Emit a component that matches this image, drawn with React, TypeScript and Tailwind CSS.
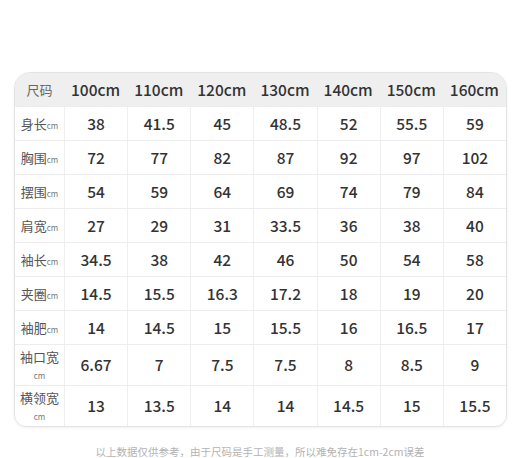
const SIZES = ['100cm', '110cm', '120cm', '130cm', '140cm', '150cm', '160cm']

const ROWS: Array<{ label: string; values: string[]; tall?: boolean }> = [
  { label: '身长', values: ['38', '41.5', '45', '48.5', '52', '55.5', '59'] },
  { label: '胸围', values: ['72', '77', '82', '87', '92', '97', '102'] },
  { label: '摆围', values: ['54', '59', '64', '69', '74', '79', '84'] },
  { label: '肩宽', values: ['27', '29', '31', '33.5', '36', '38', '40'] },
  { label: '袖长', values: ['34.5', '38', '42', '46', '50', '54', '58'] },
  { label: '夹圈', values: ['14.5', '15.5', '16.3', '17.2', '18', '19', '20'] },
  { label: '袖肥', values: ['14', '14.5', '15', '15.5', '16', '16.5', '17'] },
  { label: '袖口宽', values: ['6.67', '7', '7.5', '7.5', '8', '8.5', '9'], tall: true },
  { label: '横领宽', values: ['13', '13.5', '14', '14', '14.5', '15', '15.5'], tall: true },
]

const font = { fontFamily: '"Noto Sans CJK SC", "Noto Sans", sans-serif' }

export default function App() {
  return (
    <div className="w-[520px] h-[458px] bg-white pt-[72px] px-[14px]" style={font}>
      <div className="w-[493px] border border-[#e3e3e3] rounded-t-[16px] rounded-b-[12px] overflow-hidden shadow-[0_1px_3px_rgba(0,0,0,0.06)]">
        <div className="grid grid-cols-[49px_repeat(7,1fr)] h-[33px] bg-[#efefef] items-center">
          <div className="text-center text-[13px] text-[#666]">尺码</div>
          {SIZES.map((s) => (
            <div key={s} className="text-center text-[15.5px] font-medium text-[#333]">{s}</div>
          ))}
        </div>
        {ROWS.map((r) => (
          <div
            key={r.label}
            className={`grid grid-cols-[49px_repeat(7,1fr)] border-t border-[#ededed] ${r.tall ? 'h-[41px]' : 'h-[34px]'}`}
          >
            {r.tall ? (
              <div className="flex flex-col items-center justify-between py-[4px]">
                <span className="text-[13px] text-[#555] leading-[16px]">{r.label}</span>
                <span className="text-[8px] text-[#777] leading-[10px]">cm</span>
              </div>
            ) : (
              <div className="flex items-center justify-center text-[13px] text-[#555]">
                {r.label}
                <span className="text-[8px] text-[#777] mt-[4px]">cm</span>
              </div>
            )}
            {r.values.map((v, i) => (
              <div key={i} className="flex items-center justify-center border-l border-[#efefef] text-[15.5px] font-medium text-[#333]">
                {v}
              </div>
            ))}
          </div>
        ))}
      </div>
      <div className="mt-[17px] text-center text-[10.5px] leading-[16px] text-[#b3b3b3]">
        以上数据仅供参考，由于尺码是手工测量，所以难免存在1cm-2cm误差
      </div>
    </div>
  )
}
